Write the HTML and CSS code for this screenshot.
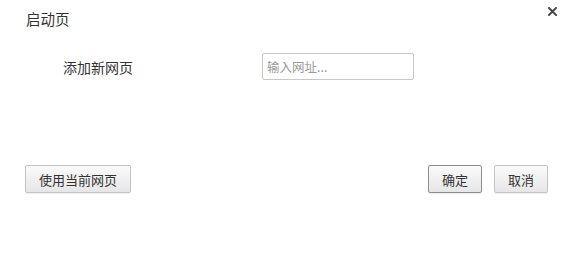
FILE: index.html
```html
<!DOCTYPE html>
<html lang="zh">
<head>
<meta charset="utf-8">
<title>启动页</title>
<link rel="stylesheet" href="styles.css">
</head>
<body>
<div class="dialog">
  <div class="header">
    <div class="title">启动页</div>
    <button class="close" aria-label="关闭">
      <svg width="9" height="9" viewBox="0 0 9 9"><path d="M1 1L8 8M8 1L1 8" stroke="#4a4a4a" stroke-width="2" stroke-linecap="square"/></svg>
    </button>
  </div>
  <div class="row">
    <div class="label">添加新网页</div>
    <input class="url" type="text" placeholder="输入网址...">
  </div>
  <div class="footer">
    <button class="btn btn-wide">使用当前网页</button>
    <div class="actions">
      <button class="btn btn-small btn-default">确定</button>
      <button class="btn btn-small">取消</button>
    </div>
  </div>
</div>
</body>
</html>
```

FILE: styles.css
```css
html, body {
  margin: 0;
  padding: 0;
  background: #fff;
}
body {
  font-family: "Noto Sans CJK SC", "Liberation Sans", sans-serif;
  color: #333;
  width: 578px;
  height: 262px;
  overflow: hidden;
}
.dialog {
  width: 578px;
  height: 262px;
  box-sizing: border-box;
}
.header {
  height: 53px;
  box-sizing: border-box;
  display: flex;
  justify-content: space-between;
  align-items: flex-start;
  padding: 9px 21px 0 26px;
}
.title {
  font-size: 14.5px;
  line-height: 20px;
  color: #333;
}
.close {
  border: 0;
  background: none;
  padding: 0;
  margin-top: -2px;
  width: 9px;
  height: 9px;
  display: flex;
  cursor: pointer;
}
.row {
  display: flex;
  align-items: center;
  height: 27px;
}
.label {
  margin-left: 63px;
  width: 199px;
  font-size: 14px;
  line-height: 20px;
  color: #333;
}
.url {
  width: 152px;
  height: 27px;
  box-sizing: border-box;
  border: 1px solid #c8c8c8;
  border-radius: 2px;
  padding: 0 4px;
  font-family: "Noto Sans CJK SC", "Liberation Sans", sans-serif;
  font-size: 12.5px;
  color: #333;
  outline: none;
}
.url::placeholder {
  color: #9a9a9a;
}
.footer {
  margin-top: 85px;
  display: flex;
  justify-content: space-between;
  padding: 0 30px 0 25px;
}
.actions {
  display: flex;
  gap: 12px;
}
.btn {
  height: 28px;
  box-sizing: border-box;
  border: 1px solid #c4c4c4;
  border-radius: 2px;
  background: linear-gradient(#fafafa, #e6e6e6);
  box-shadow: 0 1px 1px rgba(0,0,0,0.08);
  font-family: "Noto Sans CJK SC", "Liberation Sans", sans-serif;
  font-size: 13px;
  color: #333;
  padding: 0;
  cursor: pointer;
}
.btn-wide {
  width: 106px;
}
.btn-small {
  width: 54px;
}
.btn-default {
  border-color: #8e8e8e;
}
```
